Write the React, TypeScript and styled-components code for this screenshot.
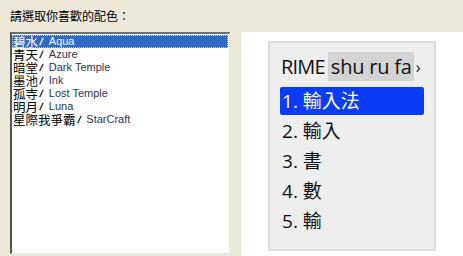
import styled, { createGlobalStyle } from 'styled-components';

const GlobalStyle = createGlobalStyle`
  html, body {
    margin: 0;
    padding: 0;
    background: #ece9d8;
    overflow: hidden;
  }
`;

const schemes = [
  { zh: '碧水', en: 'Aqua' },
  { zh: '青天', en: 'Azure' },
  { zh: '暗堂', en: 'Dark Temple' },
  { zh: '墨池', en: 'Ink' },
  { zh: '孤寺', en: 'Lost Temple' },
  { zh: '明月', en: 'Luna' },
  { zh: '星際我爭霸', en: 'StarCraft' },
];

const candidates = ['輸入法', '輸入', '書', '數', '輸'];

const App = () => {
  return (
    <>
      <GlobalStyle />
      <Page>
        <Label>請選取你喜歡的配色：</Label>
        <Body>
          <ListBox>
            {schemes.map((s, i) => (
              <ListItem key={s.en} $selected={i === 0}>
                <Zh>{s.zh}</Zh>
                <Slash>/</Slash>
                <En $selected={i === 0}>{s.en}</En>
              </ListItem>
            ))}
          </ListBox>
          <Preview>
            <CandidateBox>
              <PreeditRow>
                <Brand>RIME</Brand>
                <Preedit>shu ru fa</Preedit>
                <Caret>›</Caret>
              </PreeditRow>
              {candidates.map((c, i) => (
                <Candidate key={c} $active={i === 0}>
                  {i + 1}. {c}
                </Candidate>
              ))}
            </CandidateBox>
          </Preview>
        </Body>
      </Page>
    </>
  );
};

export default App;

const Page = styled.div`
  width: 463px;
  height: 256px;
  display: flex;
  flex-direction: column;
  font-family: 'Liberation Sans', 'Noto Sans CJK TC', sans-serif;
`;

const Label = styled.div`
  height: 32px;
  box-sizing: border-box;
  padding: 8px 0 0 10px;
  font-family: 'Noto Sans CJK TC', sans-serif;
  font-size: 12px;
  line-height: 16px;
  color: #000;
`;

const Body = styled.div`
  display: flex;
  align-items: flex-start;
  gap: 11px;
  padding-left: 10px;
`;

const ListBox = styled.div`
  width: 220px;
  height: 222px;
  box-sizing: border-box;
  background: #fff;
  border-style: solid;
  border-width: 2px 1px 1px 2px;
  border-color: #6f6f6f #e8e8e8 #e8e8e8 #555;
  padding: 1px 1px 0 0;
  display: flex;
  flex-direction: column;
`;

const ListItem = styled.div<{ $selected?: boolean }>`
  height: 13px;
  display: flex;
  align-items: center;
  padding-left: 1px;
  white-space: nowrap;
  background: ${(p) => (p.$selected ? '#316ac5' : 'transparent')};
  color: ${(p) => (p.$selected ? '#fff' : '#000')};
  outline: ${(p) => (p.$selected ? '1px dotted #c8d4ec' : 'none')};
  outline-offset: -1px;
`;

const Zh = styled.span`
  font-family: 'Noto Sans CJK TC', sans-serif;
  font-size: 12.5px;
  line-height: 13px;
  height: 13px;
  overflow: visible;
`;

const Slash = styled.span`
  font-family: 'Liberation Sans', sans-serif;
  font-size: 10px;
  font-weight: 700;
  line-height: 13px;
  margin-left: 2px;
  transform: skewX(-15deg);
`;

const En = styled.span<{ $selected?: boolean }>`
  font-family: 'Liberation Sans', 'DejaVu Sans', sans-serif;
  font-size: 11px;
  line-height: 13px;
  margin-left: 6px;
  color: ${(p) => (p.$selected ? '#fff' : '#333355')};
`;

const Preview = styled.div`
  width: 222px;
  height: 224px;
  background: #fff;
  padding: 9px 0 0 27px;
  box-sizing: border-box;
`;

const CandidateBox = styled.div`
  width: 168px;
  height: 210px;
  box-sizing: border-box;
  background: #eeeeee;
  border: 2px solid #dddddd;
  padding: 9px 10px 0 10px;
  display: flex;
  flex-direction: column;
  font-family: 'Open Sans', 'Noto Sans CJK TC', sans-serif;
  color: #111;
`;

const PreeditRow = styled.div`
  display: flex;
  align-items: center;
  height: 29px;
  margin-bottom: 6px;
  font-size: 20px;
`;

const Brand = styled.span`
  margin-left: 1px;
  letter-spacing: -0.8px;
`;

const Preedit = styled.span`
  background: #d4d4d4;
  height: 29px;
  line-height: 29px;
  padding: 0 2px 0 3px;
  margin-left: 3px;
  letter-spacing: -0.2px;
`;

const Caret = styled.span`
  font-size: 16px;
  margin-left: 2px;
`;

const Candidate = styled.div<{ $active?: boolean }>`
  height: 28px;
  line-height: 28px;
  margin-bottom: 2px;
  padding-left: 2px;
  font-size: 19px;
  border-radius: 2px;
  background: ${(p) => (p.$active ? '#0a3cf5' : 'transparent')};
  color: ${(p) => (p.$active ? '#fff' : '#111')};
  white-space: nowrap;
`;
